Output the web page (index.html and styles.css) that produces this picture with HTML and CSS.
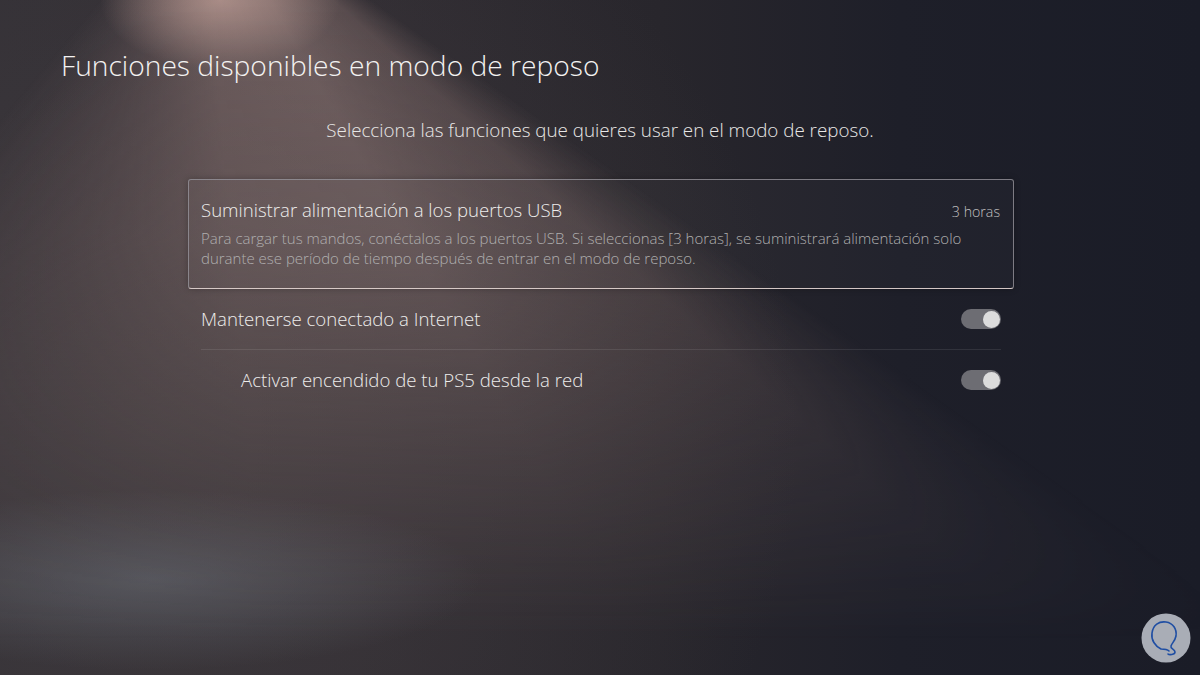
FILE: index.html
```html
<!DOCTYPE html>
<html lang="es">
<head>
<meta charset="utf-8">
<title>Funciones disponibles en modo de reposo</title>
<link rel="stylesheet" href="styles.css">
</head>
<body>
<div class="screen">
  <div class="beam"></div>
  <header class="page-head">
    <h1 class="title">Funciones disponibles en modo de reposo</h1>
  </header>
  <p class="subtitle">Selecciona las funciones que quieres usar en el modo de reposo.</p>
  <section class="list">
    <div class="item item-focused">
      <div class="item-top">
        <span class="item-label">Suministrar alimentación a los puertos USB</span>
        <span class="item-value">3 horas</span>
      </div>
      <p class="item-desc">Para cargar tus mandos, conéctalos a los puertos USB. Si seleccionas [3 horas], se suministrará alimentación solo<br>durante ese período de tiempo después de entrar en el modo de reposo.</p>
    </div>
    <div class="item row">
      <span class="item-label">Mantenerse conectado a Internet</span>
      <span class="toggle"><span class="knob"></span></span>
    </div>
    <div class="divider"></div>
    <div class="item row sub">
      <span class="item-label">Activar encendido de tu PS5 desde la red</span>
      <span class="toggle"><span class="knob"></span></span>
    </div>
  </section>
  <div class="logo">
    <svg viewBox="0 0 50 50" width="50" height="50">
      <circle cx="25" cy="25" r="24.5" fill="#a9adb6"/>
      <path d="M20 36 C14 33 10 27 11 20 C12 12 18 8 25 9 C32 10 36 16 35 23 C34 28 31 30 30 33 C29 36 34 36 34 39 C34 42 28 42 27 41 M20 36 C24 36 27 37 28 38" fill="none" stroke="#1f4ea3" stroke-width="1.6" stroke-linecap="round" stroke-linejoin="round"/>
    </svg>
  </div>
</div>
</body>
</html>
```
FILE: styles.css
```css
* { box-sizing: border-box; }
html, body {
  margin: 0;
  padding: 0;
  width: 1200px;
  height: 675px;
  overflow: hidden;
  background: #1b1d28;
}
.screen {
  position: relative;
  width: 1200px;
  height: 675px;
  overflow: hidden;
  font-family: "Open Sans", "Noto Sans", "Liberation Sans", sans-serif;
  font-weight: 300;
  color: #ecebea;
  background:
    radial-gradient(ellipse 120px 70px at 220px 0px, rgba(205,170,160,0.75), rgba(205,170,160,0) 100%),
    radial-gradient(ellipse 330px 90px at 150px 580px, rgba(112,120,130,0.45), rgba(112,120,130,0) 100%),
    radial-gradient(ellipse 650px 650px at 150px 430px, rgba(72,66,68,0.6), rgba(72,66,68,0) 100%),
    linear-gradient(to right, #322f35 0%, #302c32 30%, #28262c 55%, #1e1f29 75%, #1a1c27 100%);
  display: flex;
  flex-direction: column;
}
.beam {
  position: absolute;
  left: 0;
  top: 0;
  width: 1200px;
  height: 675px;
  pointer-events: none;
  background:
    conic-gradient(from 125deg at 200px -120px, rgba(165,135,130,0) 0deg, rgba(165,135,130,0.32) 7deg, rgba(175,145,140,0.48) 25deg, rgba(170,140,135,0.45) 50deg, rgba(160,130,128,0.22) 75deg, rgba(150,120,115,0) 95deg, rgba(150,120,115,0) 360deg);
  -webkit-mask-image: linear-gradient(to bottom, #000 0%, rgba(0,0,0,0.8) 35%, rgba(0,0,0,0.3) 70%, rgba(0,0,0,0) 95%);
  mask-image: linear-gradient(to bottom, #000 0%, rgba(0,0,0,0.8) 35%, rgba(0,0,0,0.3) 70%, rgba(0,0,0,0) 95%);
}
.page-head {
  position: relative;
  padding: 46px 0 0 61px;
}
.title {
  margin: 0;
  font-weight: 300;
  font-size: 28.2px;
  line-height: 38px;
  color: #f3f2f1;
}
.subtitle {
  position: relative;
  margin: 34px 0 0;
  text-align: center;
  font-size: 18.8px;
  line-height: 24px;
  color: #e8e7e6;
}
.list {
  position: relative;
  margin: 37px 0 0 188px;
  width: 826px;
  display: flex;
  flex-direction: column;
}
.item {
  padding: 0 13px;
}
.item-focused {
  height: 110px;
  padding: 18px 13px 0 12px;
  border: 1.5px solid rgba(150,148,155,0.8);
  border-bottom-color: rgba(222,208,205,0.95);
  border-radius: 3px;
  background: rgba(255,255,255,0.02);
  box-shadow: 0 0 6px rgba(0,0,0,0.25);
}
.item-top {
  display: flex;
  justify-content: space-between;
  align-items: baseline;
}
.item-label {
  font-size: 18.6px;
  line-height: 24px;
  color: #eeedec;
}
.item-value {
  font-size: 14.2px;
  color: #c2c1c1;
}
.item-desc {
  margin: 6px 0 0;
  font-size: 15px;
  line-height: 20px;
  white-space: nowrap;
  color: #b0afaf;
}
.row {
  display: flex;
  justify-content: space-between;
  align-items: center;
  height: 60px;
}
.row.sub {
  padding-left: 53px;
}
.divider {
  margin: 0 13px;
  height: 1px;
  background: rgba(255,255,255,0.09);
}
.toggle {
  position: relative;
  display: flex;
  align-items: center;
  justify-content: flex-end;
  width: 40px;
  height: 20px;
  border-radius: 10px;
  background: #6d6d73;
  padding: 1.5px;
}
.knob {
  width: 17px;
  height: 17px;
  border-radius: 50%;
  background: #dcdcdc;
}
.logo {
  position: absolute;
  left: 1141px;
  top: 613px;
  width: 50px;
  height: 50px;
}
.logo svg { display: block; }
```
